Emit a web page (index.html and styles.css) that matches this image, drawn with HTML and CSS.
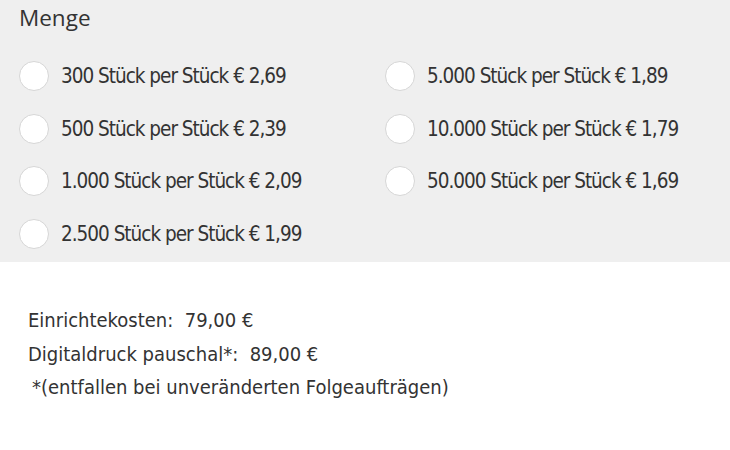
FILE: index.html
```html
<!DOCTYPE html>
<html lang="de">
<head>
<meta charset="utf-8">
<link rel="stylesheet" href="styles.css">
</head>
<body>
<section class="menge">
  <h2 class="title">Menge</h2>
  <div class="options">
    <div class="col">
      <label class="opt"><span class="radio"></span>300 Stück per Stück € 2,69</label>
      <label class="opt"><span class="radio"></span>500 Stück per Stück € 2,39</label>
      <label class="opt"><span class="radio"></span>1.000 Stück per Stück € 2,09</label>
      <label class="opt"><span class="radio"></span>2.500 Stück per Stück € 1,99</label>
    </div>
    <div class="col">
      <label class="opt"><span class="radio"></span>5.000 Stück per Stück € 1,89</label>
      <label class="opt"><span class="radio"></span>10.000 Stück per Stück € 1,79</label>
      <label class="opt"><span class="radio"></span>50.000 Stück per Stück € 1,69</label>
    </div>
  </div>
</section>
<section class="costs">
  <p>Einrichtekosten:&nbsp; 79,00 €</p>
  <p>Digitaldruck pauschal*:&nbsp; 89,00 €</p>
  <p class="note">*(entfallen bei unveränderten Folgeaufträgen)</p>
</section>
</body>
</html>
```

FILE: styles.css
```css
html, body {
  margin: 0;
  padding: 0;
  background: #fff;
  color: #333;
}
.menge {
  background: #efefef;
  height: 262px;
  box-sizing: border-box;
  padding: 2px 0 0 19px;
}
.title {
  margin: 0;
  font-family: "Open Sans", sans-serif;
  font-weight: 400;
  font-size: 22.5px;
  line-height: 32px;
  color: #333;
}
.options {
  display: flex;
  margin-top: 27px;
}
.col {
  display: flex;
  flex-direction: column;
  gap: 22.7px;
}
.col + .col {
  margin-left: 30px;
}
.col:first-child {
  width: 336px;
}
.opt {
  display: flex;
  align-items: center;
  height: 30px;
  font-family: "DejaVu Sans Condensed", "DejaVu Sans", sans-serif;
  font-stretch: condensed;
  font-size: 20.5px;
  letter-spacing: -1px;
  color: #333;
}
.radio {
  width: 28px;
  height: 28px;
  border: 1px solid #d6d6d6;
  border-radius: 50%;
  background: #fff;
  margin-right: 12px;
  flex: none;
}
.costs {
  padding: 42px 0 0 28px;
  font-family: "DejaVu Sans Condensed", "DejaVu Sans", sans-serif;
  font-stretch: condensed;
  font-size: 20px;
  color: #333;
}
.costs p {
  margin: 0;
  line-height: 33.5px;
}
.costs .note {
  padding-left: 4px;
}
```
